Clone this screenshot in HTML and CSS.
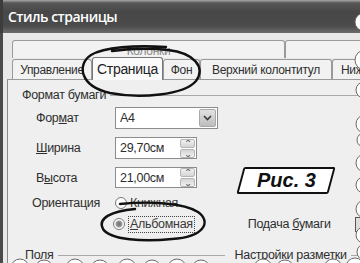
FILE: index.html
```html
<!DOCTYPE html>
<html lang="ru">
<head>
  <meta charset="UTF-8" />
  <title>Стиль страницы</title>
  <link rel="stylesheet" href="styles.css">
</head>
<body>
  <div class="window">
    <div class="titlebar">Стиль страницы</div>

    <div class="client">
      <div class="tabs back">
        <div class="tab wide"><span class="faded">Колонки</span></div>
        <div class="tab rest"></div>
      </div>
      <div class="tabs front">
        <div class="tab t-manage">Управление</div>
        <div class="tab active">Страница</div>
        <div class="tab t-bg">Фон</div>
        <div class="tab t-header">Верхний колонтитул</div>
        <div class="tab t-footer">Нижний</div>
      </div>

      <div class="panel">
        <div class="group"><span>Формат бумаги</span><i class="rule"></i></div>

        <div class="row">
          <label>Фор<u>м</u>ат</label>
          <div class="select">
            <span>A4</span>
            <span class="drop">
              <svg width="9" height="6" viewBox="0 0 9 6"><path d="M1 1l3.5 3.5L8 1" fill="none" stroke="#3a3a3a" stroke-width="1.6"/></svg>
            </span>
          </div>
        </div>

        <div class="row">
          <label><u>Ш</u>ирина</label>
          <div class="spin">
            <span>29,70см</span>
            <span class="spin-btns"><b>&#8963;</b><b class="down">&#8963;</b></span>
          </div>
        </div>

        <div class="row short">
          <label>В<u>ы</u>сота</label>
          <div class="spin">
            <span>21,00см</span>
            <span class="spin-btns"><b>&#8963;</b><b class="down">&#8963;</b></span>
          </div>
        </div>

        <div class="row orient">
          <label>Ориентация</label>
          <span class="radio"></span>
          <span class="opt">Книжная</span>
        </div>

        <div class="row album">
          <span class="radio on"></span>
          <span class="opt focus"><u>А</u>льбомная</span>
          <span class="feed">Подача <u>б</u>умаги</span>
          <span class="feed-box"></span>
        </div>

        <div class="group bottom">
          <span>Поля</span><i class="rule"></i>
          <span class="second">Настройки разметки</span><i class="rule"></i>
        </div>
      </div>
    </div>

    <svg class="marks" width="360" height="263" viewBox="0 0 360 263">
      <path d="M166 47 C135 45 104 47 91 55 C77 64 79 86 110 93 C140 99 184 95 196 81 C206 67 194 53 168 50 C150 48 128 49 112 51" fill="none" stroke="#111" stroke-width="2.4" stroke-linecap="round"/>
      <path d="M120 204 C150 201 184 203 198 212 C212 222 204 237 172 239 C144 242 110 240 103 229 C97 218 112 211 135 209" fill="none" stroke="#111" stroke-width="2.4" stroke-linecap="round"/>
    </svg>

    <div class="fig"><span>Рис. 3</span></div>

    <svg class="torn" width="360" height="263" viewBox="0 0 360 263">
      <g fill="#fff" stroke="#6a6a6a" stroke-width="1">
        <circle cx="364" cy="22" r="9"/>
        <circle cx="365" cy="60" r="10"/>
        <circle cx="364" cy="90" r="8"/>
        <circle cx="365" cy="124" r="9"/>
        <circle cx="364" cy="140" r="7"/>
        <circle cx="365" cy="163" r="9"/>
        <circle cx="364" cy="185" r="8"/>
        <circle cx="365" cy="209" r="9"/>
        <circle cx="364" cy="235" r="8"/>
        <circle cx="365" cy="252" r="8"/>
        <circle cx="20" cy="268" r="9"/>
        <circle cx="44" cy="269" r="9"/>
        <circle cx="75" cy="268" r="9"/>
        <circle cx="100" cy="269" r="9"/>
        <circle cx="127" cy="268" r="9"/>
        <circle cx="152" cy="269" r="9"/>
        <circle cx="177" cy="268" r="9"/>
        <circle cx="201" cy="269" r="9"/>
        <circle cx="263" cy="268" r="9"/>
        <circle cx="285" cy="269" r="9"/>
        <circle cx="333" cy="268" r="9"/>
        <circle cx="355" cy="267" r="9"/>
      </g>
    </svg>
  </div>
</body>
</html>
```

FILE: styles.css
```css
* { box-sizing: border-box; }

body {
  margin: 0;
  background: #fff;
  font-family: "Liberation Sans", Arial, sans-serif;
}

.window {
  position: relative;
  width: 360px;
  height: 263px;
  overflow: hidden;
  background: #e8e8e8;
  color: #2e2e2e;
  font-size: 12px;
  letter-spacing: -0.3px;
}

.titlebar {
  height: 33px;
  padding: 0 8px 0 5px;
  display: flex;
  align-items: center;
  border-left: 3px solid #3c3c3c;
  background: linear-gradient(#a8a8a8 0, #575757 3px, #474747 12px, #4b4b4b 26px, #6c6c6c 33px);
  color: #fff;
  font: 600 14px "Open Sans", sans-serif;
  letter-spacing: -0.5px;
}

.client {
  height: 230px;
  border-left: 3px solid #4a4a4a;
  padding-top: 7px;
}

/* tab rows */
.tabs {
  display: flex;
  margin-left: 9px;
}

.tab {
  flex: none;
  display: flex;
  align-items: center;
  justify-content: center;
  white-space: nowrap;
  overflow: hidden;
  border: 1px solid #9a9a9a;
  border-bottom: none;
  border-radius: 3px 3px 0 0;
  background: #f2f2f2;
}

.tabs.back { height: 18px; }
.tabs.back .wide { width: 273px; }
.tabs.back .rest { width: 120px; }
.faded { color: #8a8a8a; margin-top: 3px; }

.tabs.front {
  height: 22px;
  margin-top: -1px;
  align-items: flex-end;
}

.tabs.front .tab { height: 20px; }
.t-manage { width: 80px; }
.t-bg { width: 37px; }
.t-header { width: 132px; }
.t-footer { width: 120px; justify-content: flex-start !important; padding-left: 8px; }

.tabs.front .active {
  width: 71px;
  height: 23px;
  background: #fafafa;
  border-color: #777;
  font-size: 14px;
  color: #222;
  position: relative;
  z-index: 1;
  margin-bottom: -1px;
}

/* page panel */
.panel {
  margin-left: 4px;
  height: 200px;
  padding: 8px 0 0 14px;
  border-left: 1px solid #8a8a8a;
  border-top: 1px solid #9a9a9a;
  background: #efefef;
}

.group {
  display: flex;
  align-items: center;
  height: 14px;
  font-size: 12.5px;
  white-space: nowrap;
}

.group span { padding-right: 4px; }
.rule {
  flex: 1;
  border-top: 1px solid #a8a8a8;
  height: 0;
}

.row {
  display: flex;
  align-items: center;
  height: 22px;
  margin-top: 8px;
  padding-left: 14px;
  font-size: 12.5px;
  white-space: nowrap;
}

.group + .row { margin-top: 5px; }
.row.short { height: 21px; }

.row label { width: 79px; flex: none; }

.select, .spin {
  display: flex;
  align-items: center;
  height: 100%;
  padding: 0 1px 0 4px;
  background: #fff;
  border: 1px solid #8c8c8c;
}

.select { width: 103px; }
.select span:first-child, .spin span:first-child { flex: 1; }

.drop {
  width: 17px;
  height: 18px;
  display: flex;
  align-items: center;
  justify-content: center;
  border: 1px solid #a9a9a9;
  border-radius: 2px;
  background: linear-gradient(#e2e2e2, #bdbdbd);
}

.spin { width: 82px; }

.spin-btns {
  display: flex;
  flex-direction: column;
  gap: 1px;
  width: 15px;
}

.spin-btns b {
  height: 9px;
  display: flex;
  align-items: center;
  justify-content: center;
  font-size: 10px;
  font-weight: normal;
  line-height: 9px;
  color: #555;
  border: 1px solid #b5b5b5;
  border-radius: 2px;
  background: linear-gradient(#f2f2f2, #d4d4d4);
  overflow: hidden;
}

.spin-btns .down { transform: scaleY(-1); }

.row.orient {
  height: 18px;
  margin-top: 6px;
  padding-left: 10px;
}

.row.orient label { width: 83px; }

.radio {
  flex: none;
  width: 12px;
  height: 12px;
  border: 1px solid #777;
  border-radius: 50%;
  background: #fff;
  margin-right: 3px;
}

.radio.on {
  background: radial-gradient(circle, #6d6d6d 0, #9a9a9a 3px, #fff 4px);
}

.opt { color: #3a3a3a; }

.row.album {
  height: 18px;
  margin-top: 3px;
  padding-left: 91px;
}

.focus {
  border: 1px dotted #444;
  padding: 0 1px;
  line-height: 15px;
}

.feed { flex: none; margin-left: 53px; }

.feed-box {
  flex: none;
  margin-left: 24px;
  width: 12px;
  height: 15px;
  border: 1px solid #555;
  background: #ddd;
}

.group.bottom {
  margin-top: 15px;
  padding-left: 3px;
}

.group.bottom .rule:first-of-type { flex: none; width: 167px; }
.group.bottom .second { padding-left: 10px; }

/* overlays: hand-drawn marks, caption, torn edge */
.marks, .torn {
  position: absolute;
  top: 0;
  left: 0;
  pointer-events: none;
}

.fig {
  position: absolute;
  left: 240px;
  top: 167px;
  width: 92px;
  height: 27px;
  display: flex;
  align-items: center;
  justify-content: center;
  transform: skewX(-15deg);
  background: #fff;
  border: 2px solid #111;
  border-radius: 2px;
}

.fig span {
  transform: skewX(15deg);
  font: italic bold 20px "Liberation Sans", Arial, sans-serif;
  letter-spacing: 0;
  color: #111;
}
```
